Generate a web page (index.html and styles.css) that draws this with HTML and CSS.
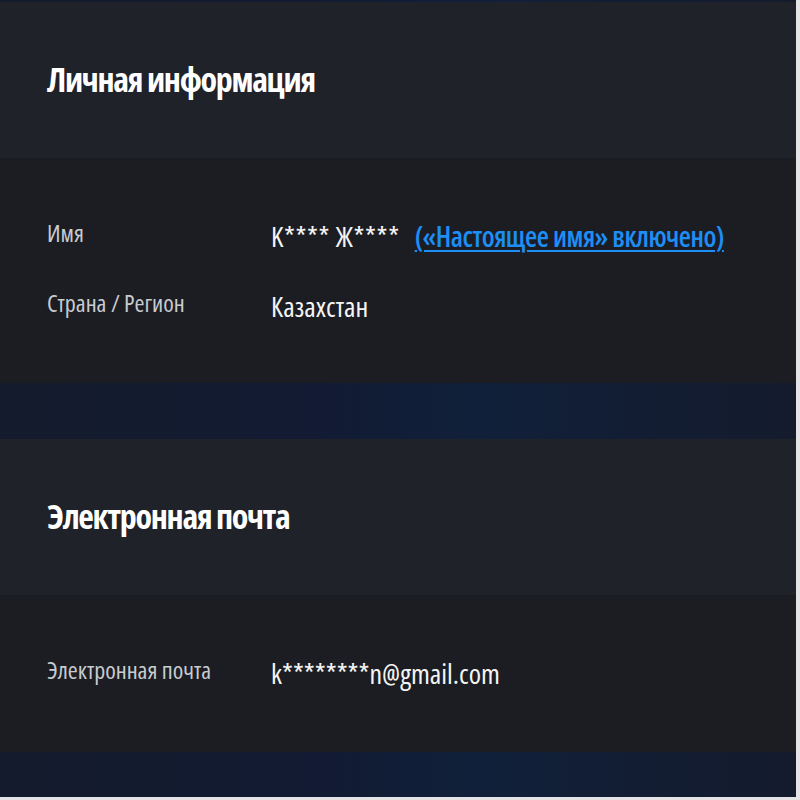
FILE: index.html
```html
<!DOCTYPE html>
<html lang="ru">

<head>
  <meta charset="UTF-8">
  <meta name="viewport" content="width=device-width, initial-scale=1.0">
  <title>Сведения об аккаунте</title>
  <link rel="stylesheet" href="styles.css">
</head>

<body>
  <div class="page">
    <section class="card card--first">
      <div class="card__head">
        <h2 class="card__title">Личная информация</h2>
      </div>
      <div class="card__body">
        <div class="row">
          <div class="row__label">Имя</div>
          <div class="row__value"><span class="row__masked">K**** Ж****</span><a class="row__link" href="#">(«Настоящее имя» включено)</a></div>
        </div>
        <div class="row">
          <div class="row__label">Страна / Регион</div>
          <div class="row__value">Казахстан</div>
        </div>
      </div>
    </section>

    <section class="card">
      <div class="card__head">
        <h2 class="card__title">Электронная почта</h2>
      </div>
      <div class="card__body">
        <div class="row">
          <div class="row__label">Электронная почта</div>
          <div class="row__value">k********n@gmail.com</div>
        </div>
      </div>
    </section>
  </div>
</body>

</html>
```

FILE: styles.css
```css
html,
body {
  margin: 0;
}

body {
  height: 800px;
  background-color: #e4e4e6;
}

.page {
  width: 796px;
  height: 797px;
  padding-top: 2px;
  box-sizing: border-box;
  background: linear-gradient(90deg, #141b2c 0%, #121b33 40%, #11203a 60%, #141b2d 100%);
}

.card {
  margin-bottom: 56px;
}

.card__head {
  height: 156px;
  display: flex;
  align-items: center;
  padding-left: 47px;
  background-color: #202229;
}

.card__title {
  margin: 0;
  margin-top: -3px;
  font-family: "Open Sans", "Liberation Sans", sans-serif;
  font-size: 34px;
  font-weight: bold;
  font-stretch: 75%;
  letter-spacing: -1.3px;
  color: #ffffff;
}

.card__body {
  padding: 58px 0 59px 47px;
  display: flex;
  flex-direction: column;
  gap: 30px;
  background-color: #1b1d23;
}

.card--first .card__body {
  padding-bottom: 57px;
}

/* у Open Sans есть ось ширины, берём узкое начертание */
.row {
  display: flex;
  align-items: flex-start;
  font-family: "Open Sans", "Noto Sans", sans-serif;
  font-stretch: 75%;
}

.row__label {
  width: 224px;
  flex-shrink: 0;
  font-size: 24px;
  line-height: 34px;
  color: #c8cbd0;
}

.row__value {
  font-size: 28px;
  line-height: 40px;
  color: #f4f4f4;
}

.row__masked {
  letter-spacing: 0.6px;
}

.row__link {
  margin-left: 15px;
  font-weight: 600;
  letter-spacing: -0.5px;
  color: #1d8ef5;
  text-decoration: underline;
  text-decoration-thickness: 2px;
  text-underline-offset: 3px;
}
```
